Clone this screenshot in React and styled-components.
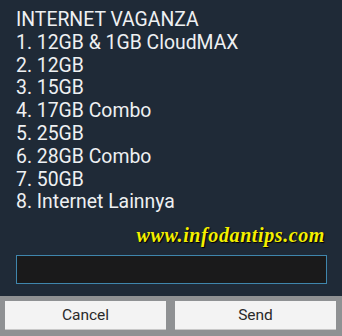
import React from "react";
import styled, { createGlobalStyle } from "styled-components";

const Global = createGlobalStyle`
  html, body { margin: 0; padding: 0; background: #1f2a37; }
  body { width: 342px; height: 336px; overflow: hidden; }
`;

const Dialog = styled.div`
  width: 342px;
  height: 336px;
  display: flex;
  flex-direction: column;
  background: #1f2a37;
  font-family: Roboto, "Noto Sans", sans-serif;
`;

const Body = styled.div`
  flex: 1;
  display: flex;
  flex-direction: column;
  padding: 9px 15px 0 16px;
`;

const Menu = styled.div`
  color: #eef0f2;
  font-size: 19.4px;
  line-height: 22.8px;
  white-space: pre;
`;

const Line = styled.div``;

const Watermark = styled.div`
  align-self: flex-end;
  margin: 11px 2px 0 0;
  font-family: "Liberation Serif", "DejaVu Serif", serif;
  font-style: italic;
  font-weight: bold;
  font-size: 20px;
  letter-spacing: 0.6px;
  color: #f4f000;
  text-shadow: 1px 1px 1px #000;
  line-height: 20px;
`;

const Input = styled.div`
  margin-top: 10px;
  height: 27px;
  border: 1px solid #3f86ad;
  background: #1a1a1b;
`;

const Footer = styled.div`
  height: 40px;
  background: #8f9193;
  display: grid;
  grid-template-columns: 1fr 1fr;
  gap: 9px;
  padding: 5px 6px 6px 5px;
  box-sizing: border-box;
`;

const Button = styled.div`
  background: #f3f3f3;
  border-bottom: 1px solid #c8c8c8;
  display: flex;
  align-items: center;
  justify-content: center;
  color: #2a2a2a;
  font-size: 15.5px;
`;

const items = [
  "INTERNET VAGANZA",
  "1. 12GB & 1GB CloudMAX",
  "2. 12GB",
  "3. 15GB",
  "4. 17GB Combo",
  "5. 25GB",
  "6. 28GB Combo",
  "7. 50GB",
  "8. Internet Lainnya",
];

export default function App() {
  return (
    <>
      <Global />
      <Dialog>
        <Body>
          <Menu>
            {items.map((t) => (
              <Line key={t}>{t}</Line>
            ))}
          </Menu>
          <Watermark>www.infodantips.com</Watermark>
          <Input />
        </Body>
        <Footer>
          <Button>Cancel</Button>
          <Button>Send</Button>
        </Footer>
      </Dialog>
    </>
  );
}
